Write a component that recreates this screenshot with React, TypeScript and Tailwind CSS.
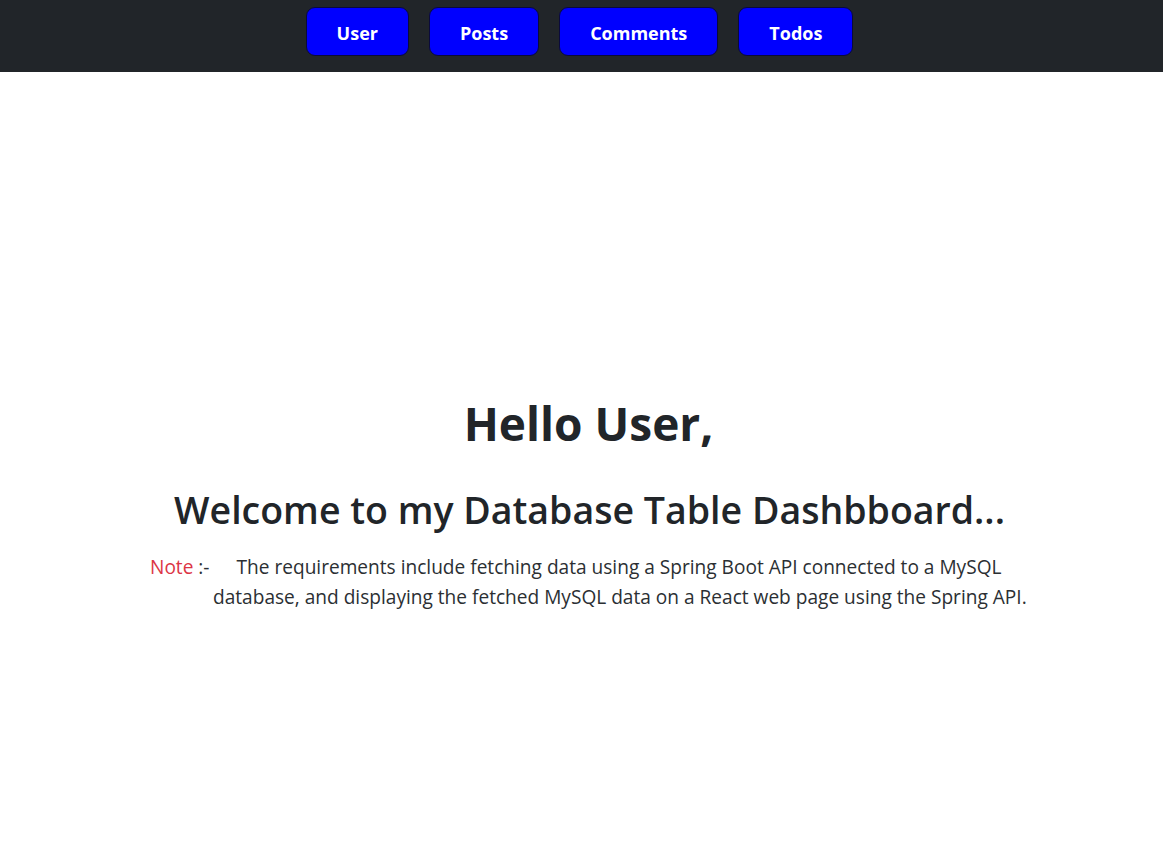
import React from 'react';

const tabs = ['User', 'Posts', 'Comments', 'Todos'];

export default function App() {
  return (
    <div className="min-h-screen bg-white text-[#212529] font-['Open_Sans',sans-serif]">
      <nav className="h-[72px] bg-[#212529] flex items-start justify-center gap-5 pt-[7px] pr-[4px]">
        {tabs.map((t) => (
          <button
            key={t}
            className="h-[49px] px-[30px] pt-[3px] rounded-[9px] border border-[#0a0a3c] bg-[#0000ff] text-white text-[18px] font-bold"
          >
            {t}
          </button>
        ))}
      </nav>

      <main className="flex flex-col items-center pt-[324px]">
        <h1 className="text-[46px] font-bold leading-[1.2] ml-[14px]">Hello User,</h1>
        <h2 className="mt-[36px] ml-[16px] text-[37.5px] font-semibold leading-[1.2]">
          Welcome to my Database Table Dashbboard...
        </h2>
      </main>

      <p className="mt-[20px] ml-[213px] w-[830px] -indent-[63px] text-[19.1px] leading-[30px] text-[#2b2f33]">
        <span className="text-[#dc3545]">Note</span> :-<span className="inline-block w-[27px]" />
        The requirements include fetching data using a Spring Boot API connected to a MySQL database, and
        displaying the fetched MySQL data on a React web page using the Spring API.
      </p>
    </div>
  );
}
